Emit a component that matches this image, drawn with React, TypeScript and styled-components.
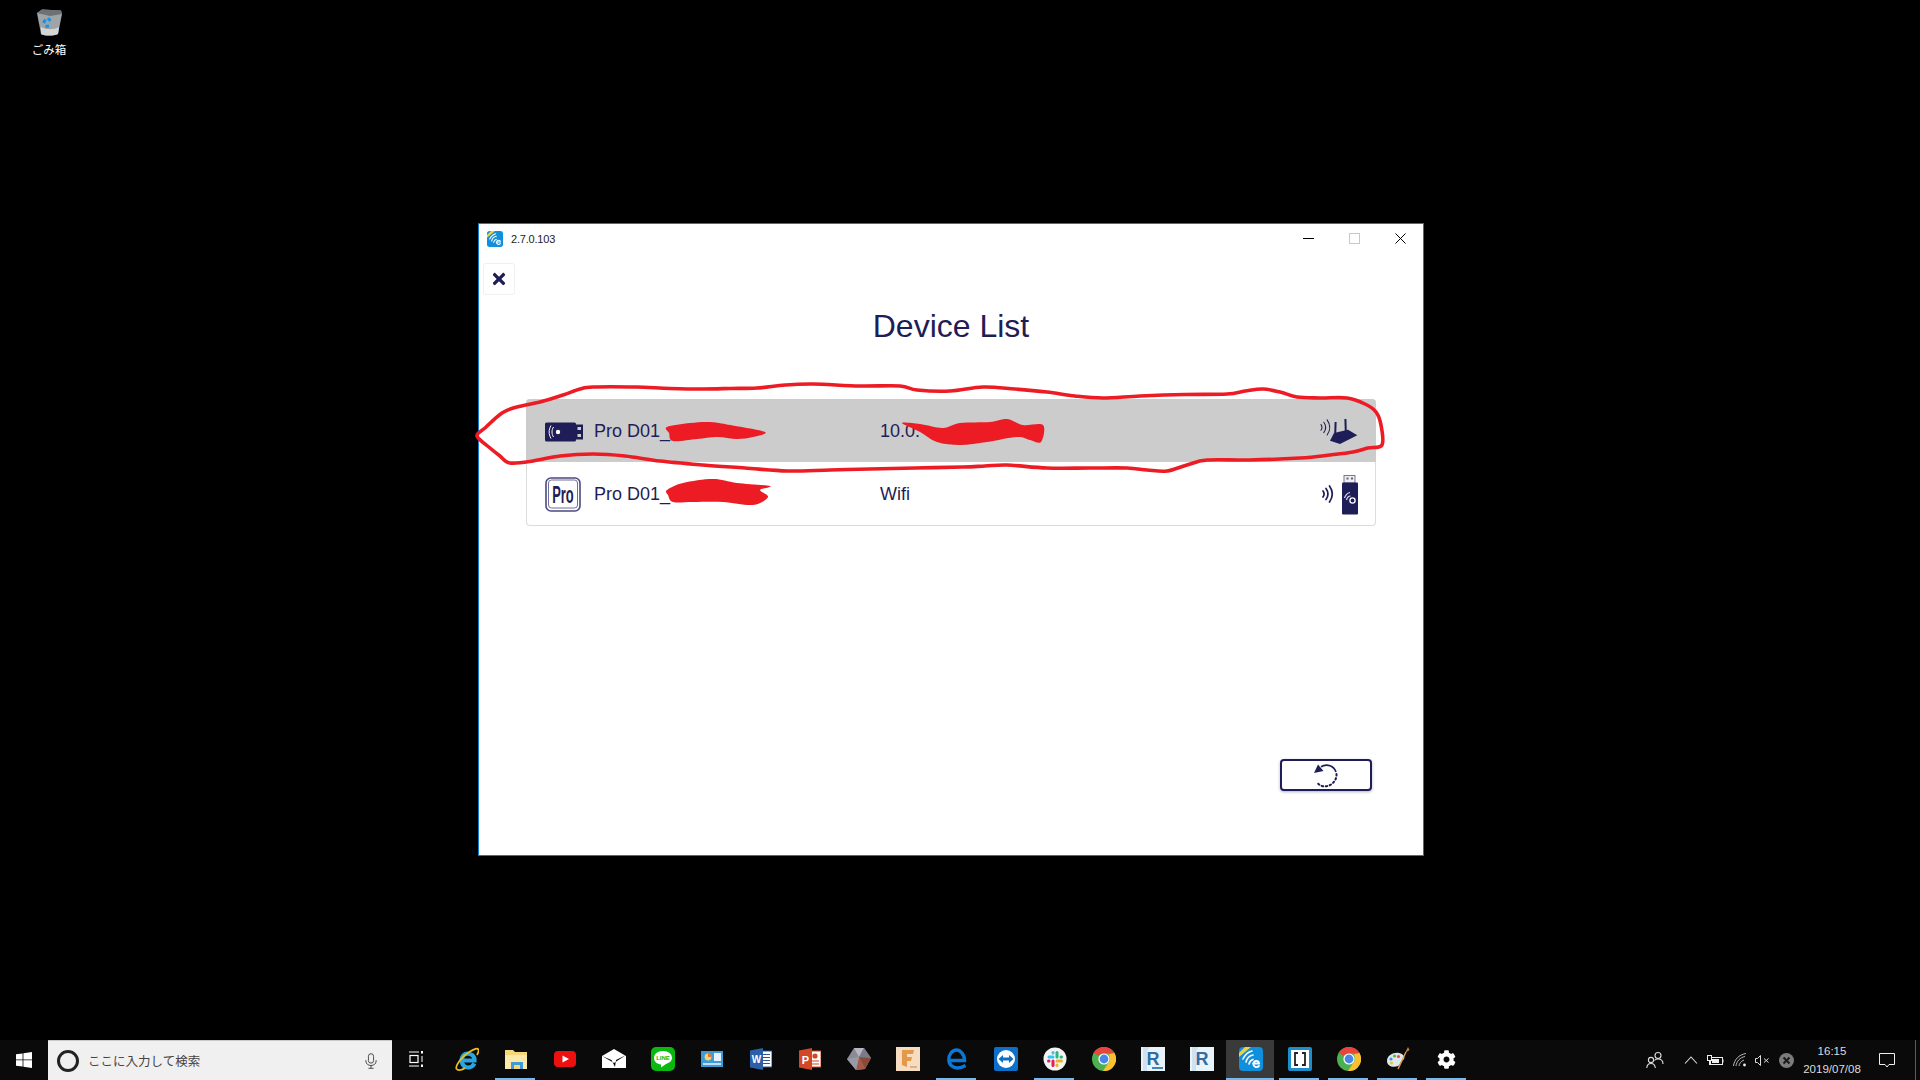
import React from "react";
import styled, { createGlobalStyle } from "styled-components";
import { FaTimes, FaCog } from "react-icons/fa";

const navy = "#1f1d57";

const Global = createGlobalStyle`
  html, body { margin: 0; padding: 0; background: #000; }
  * { box-sizing: border-box; }
  body { font-family: "Liberation Sans", Arial, sans-serif; }
`;

const Desktop = styled.div`
  position: relative;
  width: 1920px;
  height: 1080px;
  overflow: hidden;
  display: flex;
  flex-direction: column;
  background: #000;
`;
const Wallpaper = styled.main`
  position: relative;
  flex: 1;
`;
const BinShortcut = styled.div`
  position: absolute;
  left: 19px;
  top: 9px;
  width: 60px;
  display: flex;
  flex-direction: column;
  align-items: center;
  gap: 6px;
  color: #fff;
  font: 11.5px/14px "Noto Sans CJK JP", sans-serif;
`;
const AppWindow = styled.section`
  position: absolute;
  left: 478px;
  top: 223px;
  width: 946px;
  height: 633px;
  background: #fff;
  border: 1px solid #0f7ad0;
  display: flex;
  flex-direction: column;
`;
const TitleBar = styled.header`
  height: 32px;
  display: flex;
  align-items: center;
  padding: 0 0 2px 8px;
  gap: 8px;
`;
const Version = styled.span`
  flex: 1;
  font-size: 11px;
  letter-spacing: -0.2px;
  color: #222;
`;
const Controls = styled.div`
  display: flex;
  margin-bottom: 2px;
`;
const WinControl = styled.div`
  width: 46px;
  height: 30px;
  display: flex;
  align-items: center;
  justify-content: center;
`;
const CloseButton = styled.button`
  margin: 7px 0 0 4px;
  width: 32px;
  height: 32px;
  padding: 0;
  border: 1px solid #f0f0f0;
  border-radius: 3px;
  background: #fff;
  color: ${navy};
  display: flex;
  align-items: center;
  justify-content: center;
  font-size: 18px;
`;
const Title = styled.h1`
  margin: 11px 0 0;
  font-size: 32px;
  line-height: 40px;
  font-weight: 400;
  text-align: center;
  color: ${navy};
`;
const DeviceList = styled.div`
  margin: 53px auto 0;
  width: 850px;
  height: 127px;
  border: 1px solid #dcdcdc;
  border-top: 0;
  border-radius: 4px;
  display: flex;
  flex-direction: column;
`;
const DeviceRow = styled.div<{ $selected?: boolean }>`
  height: 63px;
  margin: 0 -1px;
  padding: 2px 18px 0 19px;
  display: flex;
  align-items: center;
  background: ${(p) => (p.$selected ? "#cccccc" : "transparent")};
  border-radius: ${(p) => (p.$selected ? "4px 4px 0 0" : "0")};
  color: ${navy};
  font-size: 18px;
`;
const DeviceIcon = styled.div`
  width: 49px;
  flex-shrink: 0;
  display: flex;
  align-items: center;
`;
const DeviceName = styled.span`
  width: 286px;
`;
const DeviceAddress = styled.span`
  flex: 1;
`;
const RefreshButton = styled.button`
  align-self: flex-end;
  margin: 233px 51px 0 0;
  width: 92px;
  height: 32px;
  padding: 1px 0 0;
  background: #fff;
  border: 2px solid ${navy};
  border-radius: 4px;
  box-shadow: 0 1px 3px rgba(31, 29, 87, 0.35);
  display: flex;
  align-items: center;
  justify-content: center;
`;
const Overlay = styled.svg`
  position: absolute;
  left: 0;
  top: 0;
  pointer-events: none;
`;

const Taskbar = styled.footer`
  height: 40px;
  background: #0a0a0a;
  display: flex;
  align-items: stretch;
`;
const StartButton = styled.div`
  width: 48px;
  display: flex;
  align-items: center;
  justify-content: center;
`;
const SearchBox = styled.div`
  width: 344px;
  margin-right: 1px;
  background: #f0f0f0;
  border-top: 1px solid #c8c8c8;
  display: flex;
  align-items: center;
  padding: 0 15px 0 9px;
  color: #444;
  font: 12.5px "Noto Sans CJK JP", sans-serif;
`;
const CortanaRing = styled.div`
  width: 22px;
  height: 22px;
  border-radius: 50%;
  border: 3px solid #222;
  margin-right: 9px;
`;
const SearchText = styled.span`
  flex: 1;
`;
const Slot = styled.div<{ $running?: boolean; $active?: boolean }>`
  position: relative;
  width: 49px;
  display: flex;
  align-items: center;
  justify-content: center;
  padding-bottom: 2px;
  background: ${(p) => (p.$active ? "#3a3a3a" : "transparent")};
  clip-path: ${(p) => (p.$active ? "inset(0 1px 0 0)" : "none")};
  &::after {
    content: "";
    position: absolute;
    bottom: 0;
    height: 2px;
    left: ${(p) => (p.$active ? "0" : "4px")};
    right: ${(p) => (p.$active ? "0" : "5px")};
    background: ${(p) => (p.$running || p.$active ? "#76b9ed" : "transparent")};
  }
`;
const Tray = styled.div`
  margin-left: auto;
  display: flex;
  align-items: stretch;
`;
const TrayItem = styled.div<{ $w: number }>`
  width: ${(p) => p.$w}px;
  display: flex;
  align-items: center;
  justify-content: center;
`;
const TraySpacer = styled.div`
  width: 6px;
`;
const Clock = styled.div`
  width: 64px;
  display: flex;
  flex-direction: column;
  align-items: center;
  justify-content: center;
  color: #ddd;
  font-size: 11.5px;
  line-height: 18px;
`;
const ShowDesktop = styled.div`
  width: 5px;
  margin-left: 5px;
  border-left: 1px solid #5c5c5c;
`;

const AppLogo = ({ size = 24 }: { size?: number }) => (
  <svg width={size} height={size} viewBox="0 0 24 24">
    <rect width="24" height="24" rx="4" fill="#0f8fdc" />
    <path d="M0 6 L6 0 H12 L0 10Z" fill="#e8d34a" />
    <g fill="none" stroke="#fff" strokeWidth="1.6" strokeLinecap="round">
      <path d="M4 12 C6 8 9 5 13 4" />
      <path d="M7 15 C8 11 11 8.5 14 8" />
      <path d="M10 17 C10.5 14.5 12 13 14 12.4" />
      <path d="M14 16.5 H20 C20 13 15 13 14.5 16.5 C14 20 18 21 20 19" strokeWidth="1.8" />
    </g>
  </svg>
);

const DongleIcon = () => (
  <svg width="38" height="20" viewBox="0 0 38 20">
    <rect x="0" y="0.5" width="31" height="19" rx="1.5" fill={navy} />
    <rect x="31" y="2.5" width="7" height="15" fill={navy} />
    <rect x="32.5" y="5" width="3.5" height="3" fill="#ccc" />
    <rect x="32.5" y="12" width="3.5" height="3" fill="#ccc" />
    <circle cx="13" cy="10" r="2.2" fill="#fff" />
    <g fill="none" stroke="#fff" strokeWidth="1">
      <path d="M8.5 5 C6.5 8 6.5 12 8.5 15" />
      <path d="M6 3.5 C3.5 8 3.5 12 6 16.5" />
    </g>
  </svg>
);
const ProIcon = () => (
  <svg width="36" height="35" viewBox="0 0 36 35">
    <rect x="1" y="1" width="34" height="33" rx="5" fill="#fff" stroke="#4c4a80" strokeWidth="1.6" />
    <rect x="3.5" y="3" width="29" height="28" rx="3" fill="none" stroke="#4c4a80" strokeWidth="0.8" />
    <text transform="translate(18,25.5) scale(0.56,1)" textAnchor="middle" fontFamily="'Liberation Sans', sans-serif" fontSize="23" fontWeight="700" fill={navy}>Pro</text>
  </svg>
);
const Waves = ({ size = 1 }: { size?: number }) => (
  <g fill="none" stroke={navy} strokeWidth={size} strokeLinecap="round">
    <path d="M1 8 C2.5 10 2.5 12 1 14" />
    <path d="M4 5.5 C6.5 9 6.5 13 4 16.5" />
    <path d="M7.5 3 C11 8 11 14 7.5 19" />
  </g>
);
const RouterIcon = () => (
  <svg width="38" height="28" viewBox="0 0 38 28">
    <g transform="translate(0,-1) scale(0.95)"><Waves size={1.1} /></g>
    <path d="M15.2 17 L15.6 4 M25.8 14 L25.4 1" stroke={navy} strokeWidth="2" fill="none" />
    <path d="M10 22.7 L14 15 L28 11.7 L37.3 17.3 L20 26 Z" fill={navy} />
  </svg>
);
const UsbIcon = () => (
  <svg width="36" height="40" viewBox="0 0 36 40">
    <g transform="translate(0,8)"><Waves size={1.7} /></g>
    <rect x="22" y="0.5" width="11" height="7.5" fill="#eee" stroke="#77759c" strokeWidth="1" />
    <rect x="24.5" y="2.5" width="2" height="2" fill="#666" />
    <rect x="29" y="2.5" width="2" height="2" fill="#666" />
    <rect x="20" y="7.5" width="16" height="32" rx="1" fill={navy} />
    <g fill="none" stroke="#dcdcea" strokeWidth="1.2">
      <path d="M22.5 23 C23.5 20 25.5 18 28 17.5" />
      <path d="M24.5 25 C25 23 26.5 21 28.5 21" />
    </g>
    <circle cx="30.5" cy="25.5" r="2.6" fill="none" stroke="#fff" strokeWidth="1.3" />
  </svg>
);
const RefreshIcon = () => (
  <svg width="26" height="25" viewBox="0 0 26 25">
    <path d="M8 3.7 C14 0 21 3 23 9" fill="none" stroke={navy} strokeWidth="1.7" />
    <path d="M23.5 11 C24 19 16 25 9 23 C7 22.5 6 21.5 5 20.5" fill="none" stroke={navy} strokeWidth="2" strokeDasharray="1.5 2.6" strokeLinecap="round" />
    <path d="M1 10 L5 1.5 L10.5 8 Z" fill={navy} />
  </svg>
);

const WindowsLogo = () => (
  <svg width="16" height="16" viewBox="0 0 16 16" fill="#fff">
    <path d="M0 2.3 L6.6 1.4 V7.5 H0Z M7.4 1.3 L16 0 V7.5 H7.4Z M0 8.3 H6.6 V14.6 L0 13.7Z M7.4 8.3 H16 V16 L7.4 14.8Z" />
  </svg>
);
const MicIcon = () => (
  <svg width="12" height="16" viewBox="0 0 14 18" fill="none" stroke="#444" strokeWidth="1.1">
    <rect x="4" y="0.5" width="6" height="11" rx="3" />
    <path d="M1 8 V9 C1 16 13 16 13 9 V8 M7 14 V17.5 M4 17.5 H10" />
  </svg>
);
const TaskView = () => (
  <svg width="15" height="16" viewBox="2 0 15 16" fill="none" stroke="#fff" strokeWidth="1.2" style={{ overflow: "visible" }}>
    <path d="M1 1 H11 M1 15 H11" />
    <rect x="2" y="4.5" width="8" height="7" />
    <path d="M14 0 V2.5" strokeWidth="2" />
    <path d="M14 5 V11" strokeWidth="1" />
    <path d="M14 13.5 V16" strokeWidth="2" />
  </svg>
);
const IeIcon = () => (
  <svg width="24" height="24" viewBox="0 0 24 24">
    <path d="M6.5 13.5 H19.5 C20 7 11.5 4.5 8 9 C4.5 14 8 20.5 13 20.5 C16 20.5 18 19 19.5 16.5" fill="none" stroke="#29a6e2" strokeWidth="4.2" />
    <path d="M1.5 22 C0 19 7 9 15 4.5 C19 2 23 0.5 23.5 3 C24 4.5 23 6 22 8" fill="none" stroke="#f2c21a" strokeWidth="1.7" />
    <path d="M1.5 22 C3 24 7 23 10 21" fill="none" stroke="#f2c21a" strokeWidth="1.7" />
  </svg>
);
const FolderIcon = () => (
  <svg width="24" height="22" viewBox="0 0 24 22">
    <path d="M1 2 H9 L11 4 H23 V21 H1Z" fill="#f5d67a" />
    <rect x="1" y="7" width="22" height="14" fill="#fbe9a9" />
    <rect x="7" y="14" width="12" height="7" fill="#3f9ad6" />
    <rect x="10" y="17" width="6" height="4" fill="#f5d67a" />
  </svg>
);
const YoutubeIcon = () => (
  <svg width="22" height="16" viewBox="0 0 22 16">
    <rect width="22" height="16" rx="4" fill="#ee0f10" />
    <path d="M8.5 4.5 L15 8 L8.5 11.5Z" fill="#fff" />
  </svg>
);
const MailIcon = () => (
  <svg width="24" height="20" viewBox="0 0 24 20">
    <path d="M0 7 L12 0 L24 7 V19 H0Z" fill="#fff" />
    <path d="M0 7 L12 14 L24 6 L14 11 L13 18 L9.5 11 Z" fill="#0a0a0a" />
  </svg>
);
const LineIcon = () => (
  <svg width="24" height="24" viewBox="0 0 24 24">
    <rect width="24" height="24" rx="5" fill="#0ab80f" />
    <path d="M12 4 C6.5 4 3 7 3 11 C3 14.5 6 17 10 17.5 L10 20.5 L15 17 C19 15.5 21 13.5 21 11 C21 7 17.5 4 12 4Z" fill="#fff" />
    <text x="12" y="13" textAnchor="middle" fontFamily="'Liberation Sans', sans-serif" fontSize="6" fontWeight="700" fill="#0ab80f">LINE</text>
  </svg>
);
const ControlIcon = () => (
  <svg width="22" height="16" viewBox="0 0 22 16">
    <rect width="22" height="16" fill="#3d9bd8" />
    <circle cx="7" cy="6" r="3.4" fill="#f3d27a" />
    <path d="M7 6 V2.6 A3.4 3.4 0 0 1 10.4 6Z" fill="#e2762b" />
    <rect x="13" y="2" width="7" height="8" fill="#e7f3fb" />
    <rect x="2" y="12" width="18" height="2" fill="#bfe0f3" />
  </svg>
);
const WordIcon = () => (
  <svg width="22" height="22" viewBox="0 0 22 22">
    <rect x="10" y="3" width="12" height="16" fill="#fff" stroke="#2b5797" />
    <path d="M12 6.5 H20 M12 9.5 H20 M12 12.5 H20 M12 15.5 H20" stroke="#2b5797" strokeWidth="1.2" />
    <path d="M0 2.5 L13 0 V22 L0 19.5Z" fill="#2b5fa8" />
    <text x="6.5" y="15" textAnchor="middle" fontFamily="'Liberation Sans', sans-serif" fontSize="10" fontWeight="700" fill="#fff">W</text>
  </svg>
);
const PptIcon = () => (
  <svg width="22" height="22" viewBox="0 0 22 22">
    <rect x="10" y="3" width="12" height="16" fill="#fff" stroke="#d24726" />
    <circle cx="16" cy="8" r="2.6" fill="#d24726" />
    <path d="M13 13 H20 M13 16 H20" stroke="#d24726" strokeWidth="1.2" />
    <path d="M0 2.5 L13 0 V22 L0 19.5Z" fill="#d24726" />
    <text x="6.5" y="15.5" textAnchor="middle" fontFamily="'Liberation Sans', sans-serif" fontSize="11" fontWeight="700" fill="#fff">P</text>
  </svg>
);
const GemIcon = () => (
  <svg width="24" height="24" viewBox="0 0 24 24">
    <path d="M7 1 L17 1 L24 11 L18 22 L9 23 L0 12Z" fill="#8b8b95" />
    <path d="M7 1 L17 1 L12 10Z" fill="#b7b7c4" />
    <path d="M17 1 L24 11 L12 10Z" fill="#7a7a88" />
    <path d="M24 11 L18 22 L12 10Z" fill="#8a4a3a" />
    <path d="M18 22 L9 23 L12 10Z" fill="#a65a45" />
    <path d="M9 23 L0 12 L12 10Z" fill="#9a9aa6" />
  </svg>
);
const FusionIcon = () => (
  <svg width="24" height="24" viewBox="0 0 24 24">
    <rect width="24" height="24" fill="#f6dcc0" />
    <path d="M6 3 H18 L17 7 H11 V10 H16 L15 14 H11 V20 L6 18Z" fill="#e29a4a" />
    <rect x="14" y="19" width="7" height="2" fill="#d9b28a" />
  </svg>
);
const EdgeIcon = () => (
  <svg width="20" height="22" viewBox="0 0 20 22">
    <path d="M3.5 12.5 H17.5 C17.5 6 13 2 9.5 2 C5 2 1.8 7 1.8 11.5 C1.8 17 6 20 10.5 20 C13.5 20 16 19 18.5 17.5" fill="none" stroke="#0a78d7" strokeWidth="3.3" />
  </svg>
);
const TeamViewerIcon = () => (
  <svg width="24" height="24" viewBox="0 0 24 24">
    <rect width="24" height="24" rx="2" fill="#0e6fc9" />
    <circle cx="12" cy="12" r="9" fill="#fff" />
    <path d="M4.5 12 L9 8 V10.5 H15 V8 L19.5 12 L15 16 V13.5 H9 V16Z" fill="#0e6fc9" />
  </svg>
);
const SlackIcon = () => (
  <svg width="24" height="24" viewBox="0 0 24 24">
    <circle cx="12" cy="12" r="11.5" fill="#f4f4f4" />
    <g strokeWidth="3" strokeLinecap="round">
      <path d="M6 10 H10" stroke="#36c5f0" />
      <path d="M10 5.5 V6" stroke="#36c5f0" />
      <path d="M14 5.5 V10" stroke="#2eb67d" />
      <path d="M18 10 H18.5" stroke="#2eb67d" />
      <path d="M14 14 H18.5" stroke="#ecb22e" />
      <path d="M14 18 V18.5" stroke="#ecb22e" />
      <path d="M10 14 V18.5" stroke="#e01e5a" />
      <path d="M5.5 14 H6" stroke="#e01e5a" />
    </g>
  </svg>
);
const ChromeIcon = () => (
  <svg width="24" height="24" viewBox="0 0 24 24">
    <circle cx="12" cy="12" r="12" fill="#4caf50" />
    <path d="M12 0 A12 12 0 0 1 22.4 6 H12 A6 6 0 0 0 6.8 9 L1.8 5.7 A12 12 0 0 1 12 0Z" fill="#e8453c" />
    <path d="M22.4 6 A12 12 0 0 1 11 24 L16.5 15.5 A6 6 0 0 0 16.5 7.5 Z" fill="#fbc02d" />
    <circle cx="12" cy="12" r="5.6" fill="#fff" />
    <circle cx="12" cy="12" r="4.4" fill="#4a86e8" />
  </svg>
);
const RevitIcon = ({ tail }: { tail?: boolean }) => (
  <svg width="24" height="24" viewBox="0 0 24 24">
    <rect width="24" height="24" fill="#eaf3fa" />
    <path d="M2 24 V0 H9 L6 4 V24Z" fill="#cfe2f0" />
    <text x="12" y="18" textAnchor="middle" fontFamily="'Liberation Sans', sans-serif" fontSize="18" fontWeight="700" fill="#2f6ea5">R</text>
    {tail && <rect x="11" y="20" width="11" height="2" fill="#4a82b4" />}
  </svg>
);
const BracketsIcon = () => (
  <svg width="24" height="24" viewBox="0 0 24 24">
    <rect width="24" height="24" rx="2" fill="#1b8ecb" />
    <rect x="3" y="3" width="18" height="18" fill="#fff" />
    <path d="M10 6 H7 V18 H10 M14 6 H17 V18 H14" fill="none" stroke="#222" strokeWidth="1.8" />
  </svg>
);
const PaletteIcon = () => (
  <svg width="24" height="24" viewBox="0 0 24 24">
    <path d="M1 14 C1 8 8 5 13 6 C18 7 20 11 17 13 C14 14.5 15 17 12 19 C7 21 1 19 1 14Z" fill="#dfe8ee" />
    <circle cx="5" cy="12" r="1.6" fill="#3f9ad6" />
    <circle cx="8.5" cy="9" r="1.6" fill="#6cb33f" />
    <circle cx="12.5" cy="9.5" r="1.6" fill="#e05a3a" />
    <circle cx="5.5" cy="16" r="1.6" fill="#e9c33c" />
    <path d="M12 22 L20 5" stroke="#e0a34a" strokeWidth="1.4" />
    <path d="M19 6 L22 0 L23.5 3 Z" fill="#c9803a" />
  </svg>
);
const PersonIcon = () => (
  <svg width="18" height="18" viewBox="0 0 18 18" fill="none" stroke="#ddd" strokeWidth="1.1">
    <circle cx="12" cy="4.5" r="3" />
    <circle cx="5" cy="9" r="2.6" />
    <path d="M0.8 17 C1 13.5 3 12.5 5 12.5 C7 12.5 9 13.5 9.3 17" />
    <path d="M8.5 9.5 C9 8.5 10 8 12 8 C15 8 17 10 17 13" />
  </svg>
);
const Caret = () => (
  <svg width="14" height="8" viewBox="0 0 14 8" fill="none" stroke="#ddd" strokeWidth="1.1"><path d="M1 7.5 L7 1 L13 7.5" /></svg>
);
const BatteryIcon = () => (
  <svg width="17" height="11" viewBox="0 0 17 11" fill="none" stroke="#eee" strokeWidth="1">
    <rect x="3.5" y="2.5" width="12" height="7" />
    <rect x="5" y="4" width="7" height="4" fill="#eee" stroke="none" />
    <path d="M16 4.5 V7.5" />
    <rect x="0.5" y="0.5" width="4" height="5" fill="#0a0a0a" />
    <path d="M2.5 6 V10" />
  </svg>
);
const WifiIcon = () => (
  <svg width="14" height="14" viewBox="0 0 14 14" fill="none" stroke="#ccc" strokeWidth="0.9">
    <path d="M0.5 13 C1 7 6 1.5 13 0.5" />
    <path d="M3 13 C3.5 8.5 7 4.5 12 3.5" />
    <path d="M6 13 C6 11 8 8 11 7" />
    <circle cx="11.5" cy="12" r="1.4" fill="#eee" stroke="none" />
  </svg>
);
const SpeakerIcon = () => (
  <svg width="15" height="11" viewBox="0 0 15 11" fill="none" stroke="#ddd" strokeWidth="1">
    <path d="M0.5 3.5 H2.5 L5.5 0.5 V10.5 L2.5 7.5 H0.5Z" />
    <path d="M9 3.5 L13.5 7.5 M13.5 3.5 L9 7.5" />
  </svg>
);
const ErrorIcon = () => (
  <svg width="15" height="15" viewBox="0 0 15 15">
    <circle cx="7.5" cy="7.5" r="7.5" fill="#7c7c7c" />
    <path d="M4.5 4.5 L10.5 10.5 M10.5 4.5 L4.5 10.5" stroke="#1a1a1a" strokeWidth="2" />
  </svg>
);
const NotificationIcon = () => (
  <svg width="16" height="15" viewBox="0 0 16 15" fill="none" stroke="#eee" strokeWidth="1">
    <path d="M0.5 0.5 H15.5 V11.5 H10 L8 14 L6 11.5 H0.5Z" />
  </svg>
);
const BinIcon = () => (
  <svg width="27" height="27" viewBox="0 0 27 27">
    <path d="M1 4 L6 0.5 L25 1.5 L26 5 L22 25 C17 27 9 27 5 25Z" fill="#9fa4a6" />
    <path d="M1 4 L6 0.5 L25 1.5 L26 5 L14 7Z" fill="#6d7173" />
    <path d="M5 18 C10 21 18 21 23 18 L22 25 C17 27 9 27 5 25Z" fill="#d4d6d6" />
    <path d="M7.5 14 L9.5 10.5 M12 9 L14.5 12 M13 17 L9.5 17.5" fill="none" stroke="#1592ea" strokeWidth="3" />
  </svg>
);

const apps: { icon: React.ReactNode; running?: boolean; active?: boolean }[] = [
  { icon: <TaskView /> },
  { icon: <IeIcon /> },
  { icon: <FolderIcon />, running: true },
  { icon: <YoutubeIcon /> },
  { icon: <MailIcon /> },
  { icon: <LineIcon /> },
  { icon: <ControlIcon /> },
  { icon: <WordIcon /> },
  { icon: <PptIcon /> },
  { icon: <GemIcon /> },
  { icon: <FusionIcon /> },
  { icon: <EdgeIcon />, running: true },
  { icon: <TeamViewerIcon /> },
  { icon: <SlackIcon />, running: true },
  { icon: <ChromeIcon /> },
  { icon: <RevitIcon tail /> },
  { icon: <RevitIcon /> },
  { icon: <AppLogo />, active: true },
  { icon: <BracketsIcon />, running: true },
  { icon: <ChromeIcon />, running: true },
  { icon: <PaletteIcon />, running: true },
  { icon: <FaCog color="#fff" size={19} />, running: true },
];

type Pt = [number, number];
// closed Catmull-Rom spline through hand-drawn marker points
const smooth = (p: Pt[]) => {
  const n = p.length;
  let d = `M${p[0][0]} ${p[0][1]}`;
  for (let i = 0; i < n; i++) {
    const a = p[(i - 1 + n) % n], b = p[i], c = p[(i + 1) % n], e = p[(i + 2) % n];
    const k = 1 / 6;
    d += ` C${(b[0] + (c[0] - a[0]) * k).toFixed(1)} ${(b[1] + (c[1] - a[1]) * k).toFixed(1)} ${(c[0] - (e[0] - b[0]) * k).toFixed(1)} ${(c[1] - (e[1] - b[1]) * k).toFixed(1)} ${c[0]} ${c[1]}`;
  }
  return d + "Z";
};

const ring = smooth([
  [477, 436], [485, 428], [502, 413], [517, 407], [540, 402], [563, 395], [580, 389], [593, 387],
  [636, 387], [670, 388.5], [703, 389], [730, 388.5], [757, 388], [785, 385], [813, 384], [860, 386], [900, 386],
  [917, 390], [950, 391], [983, 387], [1015, 389], [1047, 392], [1075, 396], [1103, 398], [1140, 396],
  [1185, 394.5], [1227, 394], [1245, 391], [1263, 389], [1280, 392], [1297, 397], [1320, 398], [1347, 398],
  [1365, 404], [1376, 412], [1381, 425], [1382, 445], [1368, 448], [1353, 452], [1330, 455], [1300, 458],
  [1250, 460], [1207, 460], [1187, 465], [1167, 471], [1147, 470], [1127, 468], [1090, 468], [1047, 468],
  [1007, 465], [985, 466], [963, 467], [915, 468], [870, 469], [830, 470], [787, 471], [745, 468], [703, 465],
  [660, 461], [625, 456], [593, 454], [560, 456], [533, 461], [510, 463], [500, 456], [490, 448],
]);
const blobs = [
  smooth([[667, 427], [690, 423], [710, 422], [730, 425], [765, 432], [753, 437], [737, 439], [717, 437], [697, 439], [673, 441], [669, 433]]),
  smooth([[902, 423], [920, 424], [943, 428], [960, 423], [990, 422], [1007, 419], [1023, 425], [1043, 425], [1041, 442], [1030, 440], [1017, 437], [987, 442], [960, 445], [937, 442], [920, 432]]),
  smooth([[667, 490], [683, 483], [713, 479], [737, 483], [770, 486], [760, 490], [768, 497], [753, 505], [723, 502], [693, 502], [673, 502], [668, 495]]),
];

export default function App() {
  return (
    <Desktop>
      <Global />
      <Wallpaper>
        <BinShortcut>
          <BinIcon />
          <span>ごみ箱</span>
        </BinShortcut>
        <AppWindow>
          <TitleBar>
            <AppLogo size={16} />
            <Version>2.7.0.103</Version>
            <Controls>
              <WinControl>
                <svg width="11" height="1"><rect width="11" height="1" fill="#000" /></svg>
              </WinControl>
              <WinControl>
                <svg width="11" height="11"><rect x="0.5" y="0.5" width="10" height="10" fill="none" stroke="#c8c8c8" /></svg>
              </WinControl>
              <WinControl>
                <svg width="11" height="11" fill="none" stroke="#000"><path d="M0.5 0.5 L10.5 10.5 M10.5 0.5 L0.5 10.5" /></svg>
              </WinControl>
            </Controls>
          </TitleBar>
          <CloseButton><FaTimes /></CloseButton>
          <Title>Device List</Title>
          <DeviceList>
            <DeviceRow $selected>
              <DeviceIcon><DongleIcon /></DeviceIcon>
              <DeviceName>Pro D01_</DeviceName>
              <DeviceAddress>10.0.</DeviceAddress>
              <RouterIcon />
            </DeviceRow>
            <DeviceRow>
              <DeviceIcon><ProIcon /></DeviceIcon>
              <DeviceName>Pro D01_</DeviceName>
              <DeviceAddress>Wifi</DeviceAddress>
              <UsbIcon />
            </DeviceRow>
          </DeviceList>
          <RefreshButton><RefreshIcon /></RefreshButton>
        </AppWindow>
        <Overlay width="1920" height="1040" viewBox="0 0 1920 1040">
          <path d={ring} fill="none" stroke="#ed1c24" strokeWidth="3.6" strokeLinejoin="round" />
          {blobs.map((d) => <path key={d} d={d} fill="#ed1c24" />)}
        </Overlay>
      </Wallpaper>
      <Taskbar>
        <StartButton><WindowsLogo /></StartButton>
        <SearchBox>
          <CortanaRing />
          <SearchText>ここに入力して検索</SearchText>
          <MicIcon />
        </SearchBox>
        {apps.map((a, i) => (
          <Slot key={i} $running={a.running} $active={a.active}>{a.icon}</Slot>
        ))}
        <Tray>
          <TrayItem $w={36}><PersonIcon /></TrayItem>
          <TraySpacer />
          <TrayItem $w={24}><Caret /></TrayItem>
          <TrayItem $w={25}><BatteryIcon /></TrayItem>
          <TrayItem $w={24}><WifiIcon /></TrayItem>
          <TrayItem $w={20}><SpeakerIcon /></TrayItem>
          <TrayItem $w={28}><ErrorIcon /></TrayItem>
          <Clock><span>16:15</span><span>2019/07/08</span></Clock>
          <TrayItem $w={46}><NotificationIcon /></TrayItem>
          <ShowDesktop />
        </Tray>
      </Taskbar>
    </Desktop>
  );
}
